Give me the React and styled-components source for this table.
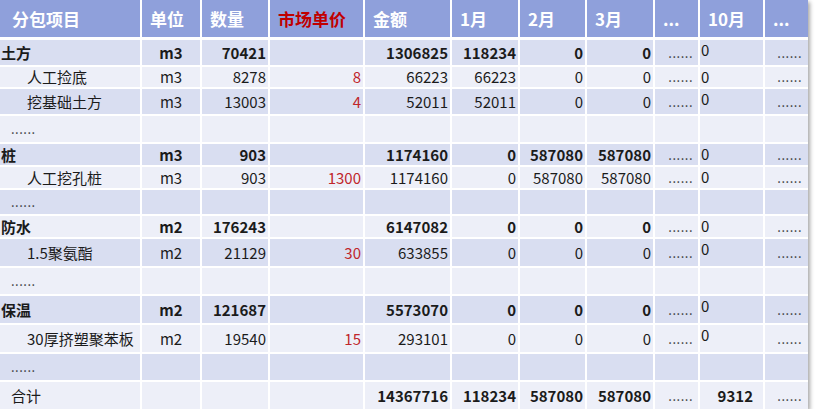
import React from "react";
import styled, { createGlobalStyle } from "styled-components";

const GlobalStyle = createGlobalStyle`
  body {
    margin: 0;
    background: #fff;
    font-family: "Noto Sans CJK SC", "Noto Sans", sans-serif;
  }
`;

const COLS = "140px 58px 66px 93px 85px 66px 65px 66px 43px 63px 43px";

const Table = styled.div`
  width: 808px;
  display: flex;
  flex-direction: column;
  gap: 2px;
  background: #fff;
  box-shadow: 2px 2px 4px rgba(0, 0, 0, 0.35);
`;

const HeaderRow = styled.div`
  display: grid;
  grid-template-columns: ${COLS};
  column-gap: 2px;
  height: 37px;
  margin-bottom: 1px;
`;

const HeadCell = styled.div`
  background: #8fa0db;
  color: ${(p) => (p.$red ? "#c00000" : "#fff")};
  font-size: 17px;
  font-weight: 700;
  display: flex;
  align-items: center;
  padding-left: ${(p) => p.$pad || 8}px;
`;

const Row = styled.div`
  display: grid;
  grid-template-columns: ${COLS};
  column-gap: 2px;
  height: ${(p) => p.$h}px;
`;

const Cell = styled.div`
  background: ${(p) => (p.$dark ? "#d9def1" : "#edeff8")};
  display: flex;
  align-items: ${(p) => (p.$top ? "flex-start" : "center")};
  justify-content: ${(p) =>
    p.$align === "right" ? "flex-end" : p.$align === "center" ? "center" : "flex-start"};
  padding: ${(p) => (p.$top ? 1 : 0)}px
    ${(p) => (p.$align === "right" ? p.$pr ?? 2 : 0)}px 0 ${(p) => p.$pl ?? 0}px;
  font-size: 15px;
  line-height: 18px;
  font-weight: ${(p) => (p.$bold ? 700 : 400)};
  color: ${(p) => (p.$red ? "#c0262b" : "#1b1b1b")};
  white-space: nowrap;
`;

const Dots = styled.span`
  font-size: 13px;
  letter-spacing: 0.5px;
  color: #333;
  font-weight: 400;
`;

const headers = [
  { t: "分包项目", pad: 12 },
  { t: "单位" },
  { t: "数量" },
  { t: "市场单价", red: true },
  { t: "金额" },
  { t: "1月" },
  { t: "2月" },
  { t: "3月" },
  { t: "...", pad: 8 },
  { t: "10月" },
  { t: "...", pad: 8 },
];

// kind: group | item | more | total
const rows = [
  { kind: "group", h: 25, v: ["土方", "m3", "70421", "", "1306825", "118234", "0", "0"] },
  { kind: "item", h: 20, v: ["人工捡底", "m3", "8278", "8", "66223", "66223", "0", "0"] },
  { kind: "item", h: 25, v: ["挖基础土方", "m3", "13003", "4", "52011", "52011", "0", "0"] },
  { kind: "more", h: 26 },
  { kind: "group", h: 21, v: ["桩", "m3", "903", "", "1174160", "0", "587080", "587080"] },
  { kind: "item", h: 21, v: ["人工挖孔桩", "m3", "903", "1300", "1174160", "0", "587080", "587080"] },
  { kind: "more", h: 24 },
  { kind: "group", h: 21, v: ["防水", "m2", "176243", "", "6147082", "0", "0", "0"] },
  { kind: "item", h: 27, v: ["1.5聚氨酯", "m2", "21129", "30", "633855", "0", "0", "0"] },
  { kind: "more", h: 26 },
  { kind: "group", h: 27, v: ["保温", "m2", "121687", "", "5573070", "0", "0", "0"] },
  { kind: "item", h: 27, v: ["30厚挤塑聚苯板", "m2", "19540", "15", "293101", "0", "0", "0"] },
  { kind: "more", h: 26 },
  { kind: "total", h: 27, v: ["合计", "", "", "", "14367716", "118234", "587080", "587080"] },
];

const DataRow = ({ row, dark }) => {
  const { kind, h } = row;
  if (kind === "more") {
    return (
      <Row $h={h}>
        <Cell $dark={dark} $pl={11}>
          <Dots>......</Dots>
        </Cell>
        {Array.from({ length: 10 }).map((_, i) => (
          <Cell key={i} $dark={dark} />
        ))}
      </Row>
    );
  }
  const v = row.v;
  const bold = kind === "group";
  const numBold = kind === "group" || kind === "total";
  const namePad = kind === "item" ? 27 : kind === "total" ? 11 : 1;
  return (
    <Row $h={h}>
      <Cell $dark={dark} $bold={bold} $pl={namePad}>
        {v[0]}
      </Cell>
      <Cell $dark={dark} $bold={bold} $align="center">
        {v[1]}
      </Cell>
      <Cell $dark={dark} $bold={bold} $align="right">
        {v[2]}
      </Cell>
      <Cell $dark={dark} $red $align="right">
        {v[3]}
      </Cell>
      {v.slice(4).map((n, i) => (
        <Cell key={i} $dark={dark} $bold={numBold} $align="right">
          {n}
        </Cell>
      ))}
      <Cell $dark={dark} $align="right" $pr={5}>
        <Dots>......</Dots>
      </Cell>
      {kind === "total" ? (
        <Cell $dark={dark} $bold $align="right" $pr={10}>
          9312
        </Cell>
      ) : (
        <Cell $dark={dark} $top $pl={1}>
          0
        </Cell>
      )}
      <Cell $dark={dark} $align="right" $pr={6}>
        <Dots>......</Dots>
      </Cell>
    </Row>
  );
};

const App = () => {
  return (
    <>
      <GlobalStyle />
      <Table>
        <HeaderRow>
          {headers.map((h, i) => (
            <HeadCell key={i} $red={h.red} $pad={h.pad}>
              {h.t}
            </HeadCell>
          ))}
        </HeaderRow>
        {rows.map((r, i) => (
          <DataRow key={i} row={r} dark={i % 2 === 0} />
        ))}
      </Table>
    </>
  );
};

export default App;
